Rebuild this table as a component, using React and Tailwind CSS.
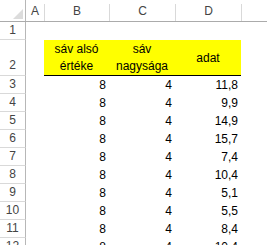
const rows = [
  [3, '8', '4', '11,8'],
  [4, '8', '4', '9,9'],
  [5, '8', '4', '14,9'],
  [6, '8', '4', '15,7'],
  [7, '8', '4', '7,4'],
  [8, '8', '4', '10,4'],
  [9, '8', '4', '5,1'],
  [10, '8', '4', '5,5'],
  [11, '8', '4', '8,4'],
  [12, '8', '4', '10,4'],
];

function ColHead({ label, w }) {
  return (
    <div className={`${w} flex items-end shrink-0`}>
      <div className="flex-1 h-full flex items-center justify-center pt-[2px]">{label}</div>
      <div className="w-px h-[17px] bg-[#d9d9d9]" />
    </div>
  );
}

function RowHead({ n, h }) {
  return (
    <div className={`w-[26px] ${h} shrink-0 border-r border-b border-[#d9d9d9] border-r-[#b7b7b7] flex items-center justify-center text-[#444]`}>
      {n}
    </div>
  );
}

export default function App() {
  return (
    <div className="w-[267px] h-[245px] overflow-hidden bg-white text-[12px] leading-[17px] text-black" style={{ fontFamily: '"Liberation Sans", Arial, sans-serif' }}>
      {/* column headers */}
      <div className="flex h-[22px] border-b border-[#ababab] text-[#444]">
        <div className="w-[26px] shrink-0 border-r border-[#b7b7b7] relative">
          <svg className="absolute left-[13px] top-[9px]" width="10" height="10" viewBox="0 0 10 10">
            <path d="M10 0 L10 10 L0 10 Z" fill="#dcdcdc" />
          </svg>
        </div>
        <ColHead label="A" w="w-[19px]" />
        <ColHead label="B" w="w-[65px]" />
        <ColHead label="C" w="w-[66px]" />
        <ColHead label="D" w="w-[66px]" />
        <div className="flex-1" />
      </div>

      {/* row 1 */}
      <div className="flex">
        <RowHead n={1} h="h-[18px]" />
      </div>

      {/* row 2, yellow header block */}
      <div className="flex">
        <div className="w-[26px] h-[36px] shrink-0 border-r border-b border-[#d9d9d9] border-r-[#b7b7b7] flex items-end justify-center pb-[1px] text-[#444]">
          2
        </div>
        <div className="w-[18px] shrink-0" />
        <div className="flex h-[36px] bg-[#ffff00] border-b border-black">
          <div className="w-[65px] flex flex-col items-center justify-center pt-[1px]">
            <span>sáv alsó</span>
            <span>értéke</span>
          </div>
          <div className="w-[66px] flex flex-col items-center justify-center pt-[1px]">
            <span>sáv</span>
            <span>nagysága</span>
          </div>
          <div className="w-[66px] flex items-center justify-center pt-[1px]">adat</div>
        </div>
      </div>

      {/* data rows */}
      {rows.map(([n, a, b, c]) => (
        <div key={n} className="flex">
          <RowHead n={n} h="h-[18px]" />
          <div className="w-[18px] shrink-0" />
          <div className="w-[65px] pr-[3px] text-right leading-[18px]">{a}</div>
          <div className="w-[66px] pr-[3px] text-right leading-[18px]">{b}</div>
          <div className="w-[66px] pr-[3px] text-right leading-[18px]">{c}</div>
        </div>
      ))}
    </div>
  );
}
